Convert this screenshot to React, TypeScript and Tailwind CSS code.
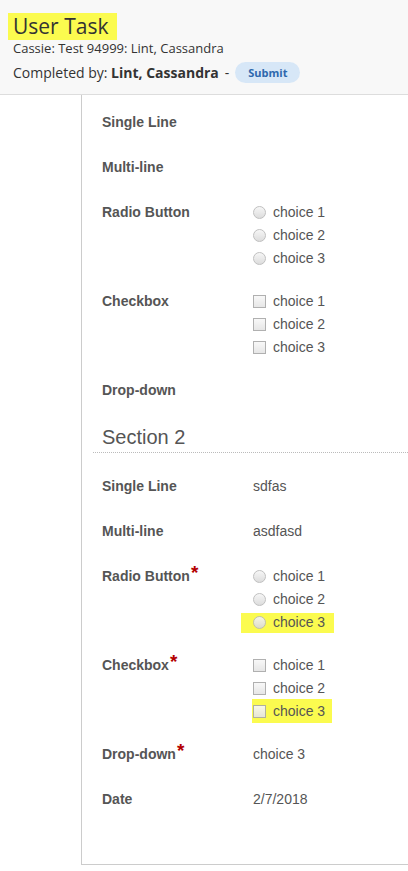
import React from 'react'

type Row = {
  label: string
  required?: boolean
  value?: string
  radios?: string[]
  checks?: string[]
  mark?: number
}

const section1: Row[] = [
  { label: 'Single Line' },
  { label: 'Multi-line' },
  { label: 'Radio Button', radios: ['choice 1', 'choice 2', 'choice 3'] },
  { label: 'Checkbox', checks: ['choice 1', 'choice 2', 'choice 3'] },
  { label: 'Drop-down' },
]

const section2: Row[] = [
  { label: 'Single Line', value: 'sdfas' },
  { label: 'Multi-line', value: 'asdfasd' },
  { label: 'Radio Button', required: true, radios: ['choice 1', 'choice 2', 'choice 3'], mark: 2 },
  { label: 'Checkbox', required: true, checks: ['choice 1', 'choice 2', 'choice 3'], mark: 2 },
  { label: 'Drop-down', required: true, value: 'choice 3' },
  { label: 'Date', value: '2/7/2018' },
]

function Radio() {
  return (
    <span className="relative w-[13px] h-[13px] rounded-full border border-[#b9b9b9] bg-gradient-to-b from-[#f6f6f6] to-[#d9d9d9] opacity-90" />
  )
}

function Check() {
  return (
    <span className="relative w-[13px] h-[13px] border border-[#a8a8a8] bg-gradient-to-b from-[#f8f8f8] to-[#e4e4e4] opacity-90" />
  )
}

function Choice({ text, kind, marked }: { text: string; kind: 'radio' | 'check'; marked: boolean }) {
  return (
    <div className="relative flex items-center h-[23px]">
      {marked && kind === 'radio' && (
        <span className="absolute left-[-12px] top-[2px] w-[93px] h-[20px] bg-[#fbfb4f]" />
      )}
      {marked && kind === 'check' && (
        <span className="absolute left-[-1px] top-[-1px] w-[80px] h-[24px] bg-[#fbfb4f]" />
      )}
      {kind === 'radio' ? <Radio /> : <Check />}
      <span className="relative ml-[7px] text-[14px] text-[#555]">{text}</span>
    </div>
  )
}

function FieldRow({ row, last }: { row: Row; last?: boolean }) {
  const multi = row.radios || row.checks
  return (
    <div className={`flex ${last ? 'mt-[2px]' : multi ? 'mb-[20px]' : 'mb-[22px]'}`}>
      <div className="w-[151px] shrink-0 h-[23px] flex items-center text-[14px] font-bold text-[#555]">
        {row.label}
        {row.required && <span className="text-[#b30000] text-[19px] leading-none self-start mt-[-2px] ml-[1px]">*</span>}
      </div>
      <div className="flex flex-col">
        {row.value && <div className="h-[23px] flex items-center text-[14px] text-[#555]">{row.value}</div>}
        {row.radios?.map((c, i) => (
          <Choice key={c} text={c} kind="radio" marked={row.mark === i} />
        ))}
        {row.checks?.map((c, i) => (
          <Choice key={c} text={c} kind="check" marked={row.mark === i} />
        ))}
      </div>
    </div>
  )
}

export default function App() {
  return (
    <div className="w-[408px] min-h-[871px] bg-white overflow-hidden">
      {/* header */}
      <header className="h-[95px] bg-[#f8f8f8] border-b border-[#dddddd] pt-[13px] pl-[8px]" style={{ fontFamily: '"Open Sans", sans-serif' }}>
        <div className="inline-block bg-[#fbfb4f] h-[27px] w-[109px] pl-[5px] text-[21px] leading-[27px] text-[#333]">User Task</div>
        <div className="pl-[5px] text-[13px] leading-[16px] text-[#333]">Cassie: Test 94999: Lint, Cassandra</div>
        <div className="pl-[5px] mt-[6px] flex items-center text-[14px] leading-[21px] text-[#333]">
          <span>Completed by:&nbsp;</span>
          <span className="font-bold">Lint, Cassandra</span>
          <span className="mx-[6px]">-</span>
          <span className="rounded-full bg-[#d7e7f7] text-[#2e68ad] font-bold text-[11px] h-[21px] w-[65px] flex items-center justify-center">Submit</span>
        </div>
      </header>

      {/* form panel */}
      <div className="ml-[81px] border-l border-b border-[#cccccc] pt-[16px] pl-[20px] pb-[53px]" style={{ fontFamily: '"Liberation Sans", Arial, sans-serif' }}>
        {section1.map((r) => (
          <FieldRow key={r.label} row={r} />
        ))}
        <div className="-ml-[9px] pl-[9px] mt-[2px] border-b border-dotted border-[#bbbbbb] h-[29px] text-[20px] leading-[27px] text-[#555] mb-[22px]">
          Section 2
        </div>
        {section2.map((r, i) => (
          <FieldRow key={r.label} row={r} last={i === section2.length - 1} />
        ))}
      </div>
    </div>
  )
}
